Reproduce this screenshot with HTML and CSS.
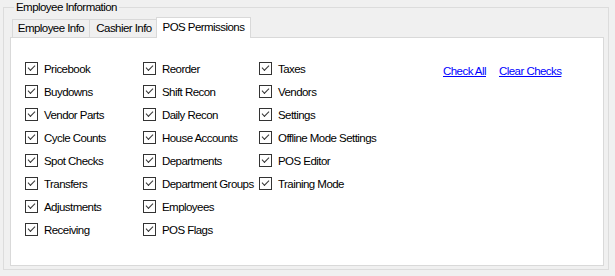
FILE: index.html
```html
<!DOCTYPE html>
<html lang="en">
<head>
    <meta charset="UTF-8">
    <title>Employee Information</title>
    <link rel="stylesheet" href="styles.css">
</head>
<body>
    <fieldset class="group">
        <legend class="group-title">Employee Information</legend>
        <div class="tabs">
            <div class="tab tab-employee">Employee Info</div>
            <div class="tab tab-cashier">Cashier Info</div>
            <div class="tab tab-pos active">POS Permissions</div>
        </div>
        <div class="panel">
            <ul class="col col1">
                <li class="check"><span class="box"></span>Pricebook</li>
                <li class="check"><span class="box"></span>Buydowns</li>
                <li class="check"><span class="box"></span>Vendor Parts</li>
                <li class="check"><span class="box"></span>Cycle Counts</li>
                <li class="check"><span class="box"></span>Spot Checks</li>
                <li class="check"><span class="box"></span>Transfers</li>
                <li class="check"><span class="box"></span>Adjustments</li>
                <li class="check"><span class="box"></span>Receiving</li>
            </ul>
            <ul class="col col2">
                <li class="check"><span class="box"></span>Reorder</li>
                <li class="check"><span class="box"></span>Shift Recon</li>
                <li class="check"><span class="box"></span>Daily Recon</li>
                <li class="check"><span class="box"></span>House Accounts</li>
                <li class="check"><span class="box"></span>Departments</li>
                <li class="check"><span class="box"></span>Department Groups</li>
                <li class="check"><span class="box"></span>Employees</li>
                <li class="check"><span class="box"></span>POS Flags</li>
            </ul>
            <ul class="col col3">
                <li class="check"><span class="box"></span>Taxes</li>
                <li class="check"><span class="box"></span>Vendors</li>
                <li class="check"><span class="box"></span>Settings</li>
                <li class="check"><span class="box"></span>Offline Mode Settings</li>
                <li class="check"><span class="box"></span>POS Editor</li>
                <li class="check"><span class="box"></span>Training Mode</li>
            </ul>
            <div class="links">
                <a href="#">Check All</a>
                <a href="#">Clear Checks</a>
            </div>
        </div>
    </fieldset>
</body>
</html>
```

FILE: styles.css
```css
body{
    margin: 0;
    background-color: #f0f0f0;
    font-family: "Liberation Sans", Arial, sans-serif;
    font-size: 11.5px;
    letter-spacing: -0.55px;
    color: #000;
}

/* group box */
.group{
    margin: 0 6px 0 3px;
    padding: 3px 4px 3px 6px;
    border: 1px solid #dcdcdc;
    min-width: 0;
}
.group-title{
    margin-left: 4px;
    padding: 0 2px;
    line-height: 14px;
}

/* tab strip */
.tabs{
    display: flex;
    align-items: flex-end;
    margin-left: 2px;
    height: 20px;
    position: relative;
}
.tab{
    box-sizing: border-box;
    height: 18px;
    line-height: 17px;
    text-align: center;
    border: 1px solid #d9d9d9;
    border-bottom: none;
    border-right: none;
}
.tab-employee{
    width: 77px;
}
.tab-cashier{
    width: 69px;
}
.tab.active{
    width: 95px;
    height: 21px;
    line-height: 18px;
    margin: 0 -2px -1px -2px;
    border-right: 1px solid #d9d9d9;
    background-color: #fff;
    position: relative;
    z-index: 1;
}

/* page */
.panel{
    box-sizing: border-box;
    height: 229px;
    border: 1px solid #d9d9d9;
    background-color: #fff;
    padding: 19px 0 0 14px;
    display: grid;
    grid-template-columns: 118px 116px 184px auto;
    align-items: start;
}
.col{
    list-style: none;
    margin: 0;
    padding: 0;
}
.check{
    display: flex;
    align-items: center;
    height: 23px;
    white-space: nowrap;
}
.box{
    box-sizing: border-box;
    width: 13px;
    height: 13px;
    border: 1px solid #333;
    margin-right: 6px;
    position: relative;
    flex: none;
}
.box::after{
    content: "";
    position: absolute;
    left: 2px;
    top: 2px;
    width: 6px;
    height: 3px;
    border-left: 1px solid #333;
    border-bottom: 1px solid #333;
    transform: rotate(-45deg);
}

.links{
    display: flex;
    gap: 13px;
    margin-top: 3px;
    line-height: 23px;
}
.links a{
    color: #0000ff;
}
```
